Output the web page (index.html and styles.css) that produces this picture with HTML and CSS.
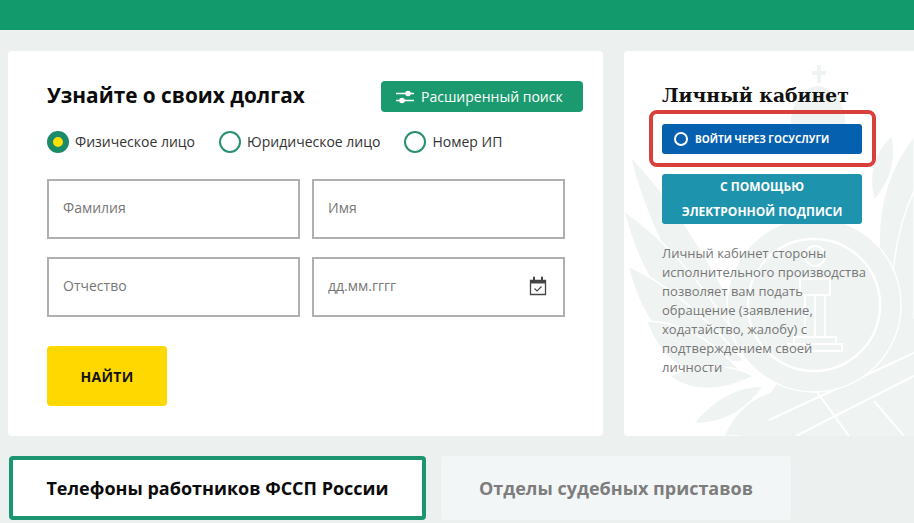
FILE: index.html
```html
<!DOCTYPE html>
<html lang="ru">
<head>
    <meta charset="UTF-8">
    <meta name="viewport" content="width=device-width, initial-scale=1.0">
    <title>Узнайте о своих долгах</title>
    <link rel="stylesheet" href="styles.css">
</head>
<body>
    <div class="topbar"></div>
    <div class="content">
        <div class="search-card">
            <div class="search-head">
                <h2 class="search-title">Узнайте о своих долгах</h2>
                <button class="advanced-button">
                    <svg class="sliders" width="18" height="14" viewBox="0 0 18 14">
                        <path d="M0 3.5h18M0 10.5h18" stroke="#fff" stroke-width="1.6"/>
                        <circle cx="12" cy="3.5" r="2.8" fill="#fff"/>
                        <circle cx="6" cy="10.5" r="2.8" fill="#fff"/>
                    </svg>
                    Расширенный поиск
                </button>
            </div>
            <div class="radios">
                <div class="radio-item"><span class="radio radio-on"></span>Физическое лицо</div>
                <div class="radio-item"><span class="radio"></span>Юридическое лицо</div>
                <div class="radio-item"><span class="radio"></span>Номер ИП</div>
            </div>
            <div class="fields">
                <input class="field" placeholder="Фамилия">
                <input class="field" placeholder="Имя">
                <input class="field" placeholder="Отчество">
                <div class="date-field">
                    <input class="field" placeholder="дд.мм.гггг">
                    <svg class="calendar" width="18" height="20" viewBox="0 0 18 20">
                        <path d="M1.5 4.5h15v14h-15z" fill="none" stroke="#444" stroke-width="1.3"/>
                        <path d="M1.5 4h15v3.5h-15z" fill="#444"/>
                        <path d="M5 1.5v4M13 1.5v4" stroke="#444" stroke-width="2" stroke-linecap="round"/>
                        <path d="M5.5 12.5l2.5 2.5 4.5-4.5" fill="none" stroke="#444" stroke-width="1.1"/>
                    </svg>
                </div>
            </div>
            <button class="find-button">НАЙТИ</button>
        </div>
        <div class="cabinet-card">
            <svg class="emblem" width="290" height="385" viewBox="0 0 290 385" fill="#eff3f2" stroke="#fff" stroke-width="1.5">
                <!-- cross and crown -->
                <path d="M188 20h5v-6h4v6h5v4h-5v8h-4v-8h-5z" stroke="none"/>
                <path d="M166 72c0-20 12-36 28-38 16 2 28 18 28 38l6 20h-68z"/>
                <!-- left wing -->
                <path d="M130 300Q40 240 6 105Q70 170 130 300Z"/>
                <path d="M125 305Q30 280 0 160Q60 200 125 305Z"/>
                <path d="M120 310Q30 320 4 215Q60 240 120 310Z"/>
                <path d="M115 318Q50 340 22 270Q70 270 115 318Z"/>
                <path d="M130 325Q80 350 45 325Q90 305 130 325Z"/>
                <path d="M140 335Q110 375 70 372Q100 335 140 335Z"/>
                <path d="M150 340Q150 370 125 385L100 385Q115 350 150 340Z"/>
                <!-- right wing -->
                <path d="M262 240Q240 150 290 85L290 240Z"/>
                <path d="M270 280Q262 200 290 140L290 290Z"/>
                <path d="M250 150Q240 110 268 84Q276 120 250 150Z"/>
                <!-- swords, lower right -->
                <path d="M118 385L160 322L290 268V385Z" stroke="none"/>
                <path d="M145 369L290 302M172 385L290 325M185 330L225 385M250 350L280 385" stroke-width="2" fill="none"/>
                <!-- medallion with the column -->
                <circle cx="190" cy="254" r="87"/>
                <circle cx="190" cy="254" r="66" stroke-width="2.5"/>
                <g fill="none" stroke-width="2">
                    <circle cx="191" cy="205" r="10"/>
                    <path d="M176 228h30v16h-30zM181 244v42M201 244v42M191 244v42M170 286h42v7h-42zM164 293h54v7h-54z"/>
                </g>
            </svg>
            <h2 class="cabinet-title">Личный кабинет</h2>
            <button class="gosuslugi-button"><span class="gosuslugi-ring"></span>Войти через госуслуги</button>
            <button class="signature-button">С помощью<br>электронной подписи</button>
            <p class="cabinet-text">Личный кабинет стороны исполнительного производства позволяет вам подать обращение (заявление, ходатайство, жалобу) с подтверждением своей личности</p>
            <div class="red-frame"></div>
        </div>
    </div>
    <div class="tabs">
        <div class="tab tab-active">Телефоны работников ФССП России</div>
        <div class="tab">Отделы судебных приставов</div>
    </div>
</body>
</html>
```

FILE: styles.css
```css
body, html {
    margin: 0;
    padding: 0;
    height: 100%;
    overflow: hidden;
    font-family: "Open Sans", sans-serif;
    background-color: #ecf1f0;
}
.topbar {
    height: 30px;
    background-color: #129a6d;
}
.content {
    display: flex;
    gap: 21px;
    margin-top: 21px;
    padding-left: 8px;
}
.search-card {
    width: 595px;
    height: 385px;
    box-sizing: border-box;
    padding: 30px 20px 0 39px;
    background-color: white;
    border-radius: 4px;
}
.search-head {
    display: flex;
    justify-content: space-between;
    align-items: flex-start;
}
.search-title {
    margin: 0;
    font-size: 20.8px;
    line-height: 28px;
    font-weight: 700;
    color: #0b0b0b;
}
.advanced-button {
    display: flex;
    align-items: center;
    gap: 7px;
    width: 202px;
    height: 31px;
    padding: 0 0 0 15px;
    border: none;
    border-radius: 4px;
    background-color: #1a9a6e;
    color: white;
    font-family: inherit;
    font-size: 14px;
}
.radios {
    display: flex;
    gap: 24px;
    margin-top: 19px;
}
.radio-item {
    display: flex;
    align-items: center;
    gap: 6px;
    height: 20px;
    font-size: 14px;
    color: #333;
}
.radio {
    width: 22px;
    height: 22px;
    margin-bottom: -2px;
    box-sizing: border-box;
    border: 2.5px solid #2a8f73;
    border-radius: 50%;
}
.radio-on {
    border: 6px solid #1a8a68;
    background-color: #ffe000;
}
.fields {
    display: grid;
    grid-template-columns: 253px 253px;
    grid-auto-rows: 60px;
    gap: 18px 12px;
    margin-top: 28px;
}
.field {
    width: 100%;
    height: 100%;
    box-sizing: border-box;
    padding: 0 14px 4px;
    border: 2px solid #b0b0b0;
    font-family: inherit;
    font-size: 14px;
    outline: none;
}
.field::placeholder {
    color: #777;
    opacity: 1;
}
.date-field {
    position: relative;
}
.calendar {
    position: absolute;
    top: 19px;
    right: 18px;
}
.find-button {
    display: block;
    width: 120px;
    height: 60px;
    margin-top: 29px;
    border: none;
    border-radius: 4px;
    background-color: #ffd800;
    color: #111;
    font-family: inherit;
    font-size: 14px;
    font-weight: 700;
    letter-spacing: 0.3px;
}
.cabinet-card {
    position: relative;
    width: 290px;
    height: 385px;
    box-sizing: border-box;
    padding: 30px 38px 0;
    background-color: white;
    border-radius: 4px 0 0 4px;
    overflow: hidden;
}
.emblem {
    position: absolute;
    top: 0;
    left: 0;
}
.cabinet-title {
    position: relative;
    margin: 0;
    font-family: "DejaVu Serif", serif;
    font-size: 18.8px;
    line-height: 28px;
    font-weight: 700;
    color: #111;
    white-space: nowrap;
}
.gosuslugi-button {
    position: relative;
    display: flex;
    align-items: center;
    gap: 7px;
    width: 200px;
    height: 30px;
    margin-top: 15px;
    padding: 0 0 0 12px;
    border: none;
    border-radius: 3px;
    background-color: #0560b0;
    color: white;
    font-family: inherit;
    font-size: 10px;
    font-weight: 700;
    text-transform: uppercase;
}
.gosuslugi-ring {
    width: 14px;
    height: 14px;
    box-sizing: border-box;
    border: 2px solid white;
    border-radius: 50%;
}
.signature-button {
    position: relative;
    display: block;
    width: 200px;
    height: 50px;
    margin-top: 20px;
    padding: 0;
    border: none;
    border-radius: 3px;
    background-color: #1d93ad;
    color: white;
    font-family: inherit;
    font-size: 12px;
    line-height: 25px;
    font-weight: 700;
    text-transform: uppercase;
}
.cabinet-text {
    position: relative;
    width: 206px;
    margin: 20px 0 0;
    font-size: 13px;
    line-height: 19px;
    color: #777;
}
.red-frame {
    position: absolute;
    top: 59px;
    left: 25px;
    width: 227px;
    height: 57px;
    box-sizing: border-box;
    border: 4px solid #d9403a;
    border-radius: 8px;
}
.tabs {
    display: flex;
    gap: 15px;
    margin-top: 20px;
    padding-left: 9px;
}
.tab {
    display: flex;
    align-items: center;
    justify-content: center;
    width: 350px;
    height: 64px;
    box-sizing: border-box;
    border-radius: 4px;
    background-color: #f3f6f6;
    color: #7d7d7d;
    font-size: 18px;
    font-weight: 700;
}
.tab-active {
    width: 417px;
    border: 4px solid #1d9470;
    background-color: white;
    color: #0b0b0b;
}
```
